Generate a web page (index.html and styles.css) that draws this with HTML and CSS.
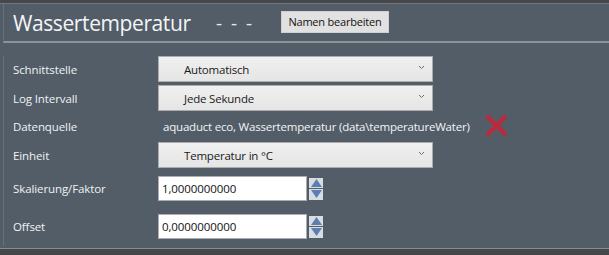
FILE: index.html
```html
<!DOCTYPE html>
<html lang="de">
<head>
  <meta charset="UTF-8">
  <title>Wassertemperatur</title>
  <link rel="stylesheet" href="styles.css">
</head>
<body>
  <div class="window">
    <div class="panel">
      <div class="header">
        <span class="title">Wassertemperatur</span>
        <span class="dashes">- - -</span>
        <button class="rename">Namen bearbeiten</button>
      </div>

      <div class="form">
        <div class="row row-first">
          <label>Schnittstelle</label>
          <div class="select">
            <span>Automatisch</span>
            <svg class="chevron" width="7" height="5" viewBox="0 0 7 5"><path d="M1 1 L3.5 3.5 L6 1" fill="none" stroke="#6d6d6d" stroke-width="1"/></svg>
          </div>
        </div>

        <div class="row row-tight">
          <label>Log Intervall</label>
          <div class="select">
            <span>Jede Sekunde</span>
            <svg class="chevron" width="7" height="5" viewBox="0 0 7 5"><path d="M1 1 L3.5 3.5 L6 1" fill="none" stroke="#6d6d6d" stroke-width="1"/></svg>
          </div>
        </div>

        <div class="row row-text">
          <label>Datenquelle</label>
          <span class="source">aquaduct eco, Wassertemperatur (data\temperatureWater)</span>
          <svg class="remove" width="26" height="25" viewBox="0 0 26 25">
            <path d="M3 3 L22 22 M22 3 L3 22" stroke="#c0273a" stroke-width="4" stroke-linecap="butt"/>
          </svg>
        </div>

        <div class="row">
          <label>Einheit</label>
          <div class="select">
            <span>Temperatur in °C</span>
            <svg class="chevron" width="7" height="5" viewBox="0 0 7 5"><path d="M1 1 L3.5 3.5 L6 1" fill="none" stroke="#6d6d6d" stroke-width="1"/></svg>
          </div>
        </div>

        <div class="row row-num">
          <label>Skalierung/Faktor</label>
          <div class="number">1,0000000000</div>
          <div class="spinner">
            <div class="spin up"><svg width="13" height="10" viewBox="0 0 13 10"><path d="M6.5 1 L12 9 L1 9 Z" fill="#5b7fb3"/></svg></div>
            <div class="spin down"><svg width="13" height="10" viewBox="0 0 13 10"><path d="M1 1 L12 1 L6.5 9 Z" fill="#5b7fb3"/></svg></div>
          </div>
        </div>

        <div class="row row-num row-last">
          <label>Offset</label>
          <div class="number">0,0000000000</div>
          <div class="spinner">
            <div class="spin up"><svg width="13" height="10" viewBox="0 0 13 10"><path d="M6.5 1 L12 9 L1 9 Z" fill="#5b7fb3"/></svg></div>
            <div class="spin down"><svg width="13" height="10" viewBox="0 0 13 10"><path d="M1 1 L12 1 L6.5 9 Z" fill="#5b7fb3"/></svg></div>
          </div>
        </div>
      </div>
    </div>
  </div>
</body>
</html>
```

FILE: styles.css
```css
* {
  margin: 0;
  padding: 0;
  box-sizing: border-box;
}

body {
  background: #454647;
  font-family: 'Open Sans', 'Noto Sans', sans-serif;
  width: 609px;
  height: 255px;
  overflow: hidden;
}

.window {
  height: 255px;
  padding-top: 3px;
  background: #464748;
}

.panel {
  height: 246px;
  padding-left: 3px;
  background: #525d68;
  border-top: 1px solid #6f7880;
  border-bottom: 1px solid #858d94;
}

.panel > * {
  border-left: 1px solid #67717a;
}

.header {
  height: 39px;
  display: flex;
  align-items: center;
  padding-left: 9px;
  border-bottom: 2px solid #8c949b;
}

.title {
  color: #f4f5f6;
  font-size: 21px;
  letter-spacing: -0.4px;
  width: 203px;
  padding-top: 1px;
}

.dashes {
  color: #e8eaec;
  font-size: 19px;
  width: 65px;
  letter-spacing: 2px;
}

.rename {
  height: 22px;
  width: 108px;
  margin-top: -2px;
  background: #e1e1e1;
  border: 1px solid #d0d0d0;
  font-family: 'Open Sans', sans-serif;
  font-size: 11px;
  color: #111;
  letter-spacing: -0.2px;
}

.form {
  padding-left: 9px;
  padding-bottom: 7px;
}

.row {
  display: flex;
  align-items: center;
  height: 26px;
}

.row-first {
  margin-top: 13px;
}

.row-tight {
  margin-top: 3px;
}

.row-text {
  height: 31px;
}

.row-num {
  height: 25px;
  margin-top: 8px;
}

.row-last {
  margin-top: 13px;
}

.row label {
  width: 145px;
  flex: none;
  color: #f0f2f4;
  font-size: 11.5px;
  letter-spacing: -0.1px;
}

.select {
  width: 275px;
  height: 100%;
  display: flex;
  align-items: center;
  justify-content: space-between;
  padding: 0 7px 0 25px;
  background: linear-gradient(#f0f0f0, #e5e5e5);
  border: 1px solid #acacac;
  font-size: 11.5px;
  color: #1a1a1a;
  letter-spacing: -0.2px;
}

.chevron {
  margin-top: -3px;
}

.source {
  color: #f2f4f6;
  font-size: 11.5px;
  letter-spacing: -0.2px;
  padding-left: 5px;
}

.remove {
  margin-left: 14px;
  margin-top: -2px;
}

.number {
  width: 149px;
  height: 100%;
  display: flex;
  align-items: center;
  padding-left: 3px;
  background: #ffffff;
  border: 1px solid #abadb3;
  font-size: 11.5px;
  color: #111;
  letter-spacing: -0.1px;
}

.spinner {
  margin-left: 2px;
  width: 14px;
  height: 22px;
  display: flex;
  flex-direction: column;
  gap: 1px;
}

.spin {
  flex: 1;
  background: #d9dde2;
  display: flex;
  align-items: center;
  justify-content: center;
}

.spin svg {
  display: block;
}
```
